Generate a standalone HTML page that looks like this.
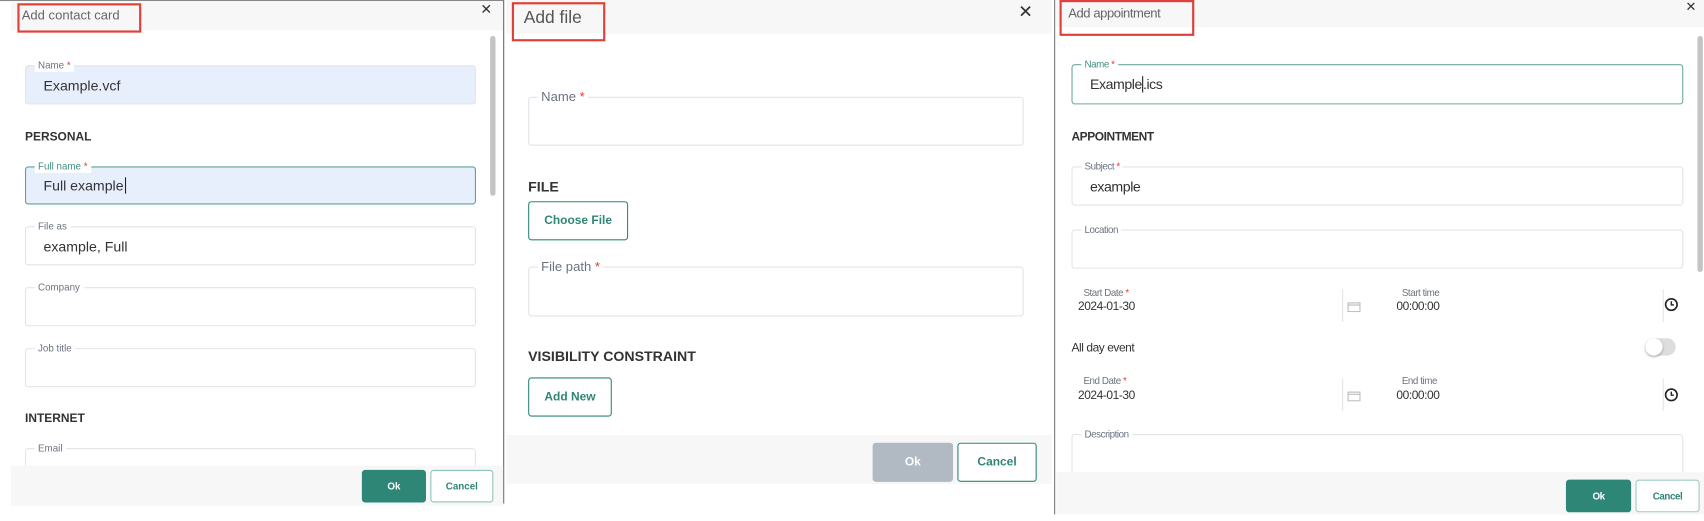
<!DOCTYPE html>
<html><head><meta charset="utf-8"><style>
*{box-sizing:border-box;margin:0;padding:0}
html,body{width:1704px;height:521px;overflow:hidden;background:#fff;font-family:"Liberation Sans",sans-serif}
#w{position:absolute;left:0;top:0;width:1568px;height:479px;transform:scale(1.0867,1.0877);transform-origin:0 0}
.a{position:absolute}
.hd{background:#f7f7f7}
.red{border:2px solid #e0403a}
.fld{position:absolute;border:1px solid #e2e4e8;border-radius:3px;background:#fff}
.lbl{position:absolute;top:-6px;left:8px;background:#fff;padding:0 3px;font-size:9px;color:#6b7280;line-height:11px}
.lbl b{color:#e53935;font-weight:normal}
.val{position:absolute;left:16px;font-size:13px;color:#333}
.sec{position:absolute;font-weight:bold;color:#333}
.btn{position:absolute;border:1px solid #2e8677;border-radius:3px;color:#2e8677;font-weight:bold;display:flex;align-items:center;justify-content:center}
.ok{background:#2e8677;color:#fff}
.x{position:absolute;color:#333;line-height:1}
.rp{letter-spacing:-0.4px}
</style></head><body><div id="w">

<!-- LEFT -->
<div class="a" style="left:0;top:0;width:463px;height:1px;background:#888"></div>
<div class="a hd" style="left:10px;top:1px;width:453px;height:27px"></div>
<div class="a" style="left:20px;top:7px;font-size:12px;color:#666">Add contact card</div>
<div class="a red" style="left:16px;top:3px;width:114px;height:27px"></div>
<div class="x" style="left:442px;top:2px;font-size:13px">✕</div>
<div class="a" style="left:463px;top:0;width:1px;height:463px;background:#666"></div>
<div class="a" style="left:451px;top:33px;width:5px;height:147px;background:#c4c4c4;border-radius:3px"></div>

<div class="fld" style="left:23px;top:60px;width:415px;height:36px;background:#e8effc"><div class="lbl" style="background:#fff">Name <b>*</b></div><div class="val" style="top:10px">Example.vcf</div></div>
<div class="sec" style="left:23px;top:120px;font-size:11px">PERSONAL</div>
<div class="fld" style="left:23px;top:153px;width:415px;height:35px;background:#e8effc;border-color:#5fa094"><div class="lbl" style="color:#3f8f81">Full name <b>*</b></div><div class="val" style="top:9px">Full example<span style="border-left:1px solid #222;margin-left:1px"></span></div></div>
<div class="fld" style="left:23px;top:208px;width:415px;height:36px"><div class="lbl">File as</div><div class="val" style="top:10px">example, Full</div></div>
<div class="fld" style="left:23px;top:264px;width:415px;height:36px"><div class="lbl">Company</div></div>
<div class="fld" style="left:23px;top:320px;width:415px;height:36px"><div class="lbl">Job title</div></div>
<div class="sec" style="left:23px;top:379px;font-size:11px">INTERNET</div>
<div class="fld" style="left:23px;top:412px;width:415px;height:36px"><div class="lbl">Email</div></div>
<div class="a hd" style="left:10px;top:428px;width:453px;height:37px"></div>
<div class="btn ok" style="left:333px;top:432px;width:59px;height:30px;font-size:9px">Ok</div>
<div class="btn" style="left:396px;top:432px;width:58px;height:30px;font-size:9px;border-color:#8fc3ba;background:#fff">Cancel</div>

<!-- MIDDLE -->
<div class="a hd" style="left:466px;top:0;width:502px;height:31px"></div>
<div class="a" style="left:482px;top:8px;font-size:16px;color:#555">Add file</div>
<div class="a red" style="left:471px;top:2px;width:86px;height:36px"></div>
<div class="x" style="left:937px;top:4px;font-size:16px">✕</div>
<div class="fld" style="left:486px;top:89px;width:456px;height:45px"><div class="lbl" style="font-size:12px;top:-8px;line-height:14px">Name <b>*</b></div></div>
<div class="sec" style="left:486px;top:164px;font-size:13px">FILE</div>
<div class="btn" style="left:486px;top:185px;width:92px;height:36px;font-size:11px">Choose File</div>
<div class="fld" style="left:486px;top:245px;width:456px;height:46px"><div class="lbl" style="font-size:12px;top:-8px;line-height:14px">File path <b>*</b></div></div>
<div class="sec" style="left:486px;top:320px;font-size:13px">VISIBILITY CONSTRAINT</div>
<div class="btn" style="left:486px;top:347px;width:77px;height:36px;font-size:11px">Add New</div>
<div class="a hd" style="left:466px;top:400px;width:502px;height:45px"></div>
<div class="btn" style="left:803px;top:407px;width:74px;height:36px;font-size:11px;background:#b1b9c2;border-color:#b1b9c2;color:#fff">Ok</div>
<div class="btn" style="left:881px;top:407px;width:73px;height:36px;font-size:11px;background:#fff">Cancel</div>
<div class="a" style="left:970px;top:0;width:1px;height:473px;background:#777"></div>

<!-- RIGHT -->
<div class="rp">
<div class="a hd" style="left:972px;top:0;width:596px;height:25px"></div>
<div class="a" style="left:983px;top:5px;font-size:12px;color:#666">Add appointment</div>
<div class="a red" style="left:975px;top:0;width:124px;height:33px"></div>
<div class="x" style="left:1551px;top:0;font-size:12px">✕</div>
<div class="a" style="left:1562px;top:33px;width:5px;height:217px;background:#c4c4c4;border-radius:3px"></div>
<div class="fld" style="left:986px;top:59px;width:563px;height:37px;border-color:#6aa99d"><div class="lbl" style="color:#3f8f81">Name <b>*</b></div><div class="val" style="top:10px">Example<span style="border-left:1px solid #222"></span>.ics</div></div>
<div class="sec" style="left:986px;top:120px;font-size:11px">APPOINTMENT</div>
<div class="fld" style="left:986px;top:153px;width:563px;height:36px"><div class="lbl">Subject <b>*</b></div><div class="val" style="top:10px">example</div></div>
<div class="fld" style="left:986px;top:211px;width:563px;height:36px"><div class="lbl">Location</div></div>

<div class="a" style="left:997px;top:264px;font-size:9px;color:#6b7280">Start Date <b style="color:#e53935;font-weight:normal">*</b></div>
<div class="a" style="left:992px;top:276px;font-size:11px;color:#333">2024-01-30</div>
<div class="a" style="left:1235px;top:266px;width:1px;height:30px;background:#e4e4e4"></div>
<svg class="a" style="left:1240px;top:277px" width="12" height="10" viewBox="0 0 12 10"><rect x="0.5" y="1.5" width="11" height="8" fill="none" stroke="#bbb"/><line x1="0" y1="3.5" x2="12" y2="3.5" stroke="#bbb"/></svg>
<div class="a" style="left:1290px;top:264px;font-size:9px;color:#6b7280">Start time</div>
<div class="a" style="left:1285px;top:276px;font-size:11px;color:#333">00:00:00</div>
<div class="a" style="left:1530px;top:266px;width:1px;height:30px;background:#e4e4e4"></div>
<svg class="a" style="left:1531px;top:273px" width="14" height="14" viewBox="0 0 14 14"><circle cx="7" cy="7" r="5.3" fill="none" stroke="#222" stroke-width="1.5"/><path d="M7 4V7.3H9.3" fill="none" stroke="#222" stroke-width="1.3"/></svg>

<div class="a" style="left:986px;top:314px;font-size:11px;color:#333">All day event</div>
<div class="a" style="left:1514px;top:311px;width:28px;height:16px;border-radius:8px;background:#ddd"></div>
<div class="a" style="left:1514px;top:311px;width:16px;height:16px;border-radius:8px;background:#fff;box-shadow:0 1px 2px rgba(0,0,0,.35)"></div>

<div class="a" style="left:997px;top:345px;font-size:9px;color:#6b7280">End Date <b style="color:#e53935;font-weight:normal">*</b></div>
<div class="a" style="left:992px;top:358px;font-size:11px;color:#333">2024-01-30</div>
<div class="a" style="left:1235px;top:348px;width:1px;height:30px;background:#e4e4e4"></div>
<svg class="a" style="left:1240px;top:359px" width="12" height="10" viewBox="0 0 12 10"><rect x="0.5" y="1.5" width="11" height="8" fill="none" stroke="#bbb"/><line x1="0" y1="3.5" x2="12" y2="3.5" stroke="#bbb"/></svg>
<div class="a" style="left:1290px;top:345px;font-size:9px;color:#6b7280">End time</div>
<div class="a" style="left:1285px;top:358px;font-size:11px;color:#333">00:00:00</div>
<div class="a" style="left:1530px;top:348px;width:1px;height:30px;background:#e4e4e4"></div>
<svg class="a" style="left:1531px;top:356px" width="14" height="14" viewBox="0 0 14 14"><circle cx="7" cy="7" r="5.3" fill="none" stroke="#222" stroke-width="1.5"/><path d="M7 4V7.3H9.3" fill="none" stroke="#222" stroke-width="1.3"/></svg>

<div class="fld" style="left:986px;top:399px;width:563px;height:50px"><div class="lbl">Description</div></div>
<div class="a hd" style="left:972px;top:434px;width:596px;height:39px"></div>
<div class="btn ok" style="left:1441px;top:441px;width:60px;height:30px;font-size:9px">Ok</div>
<div class="btn" style="left:1505px;top:441px;width:59px;height:30px;font-size:9px;border-color:#9fcac2;background:#fff">Cancel</div>
</div>
</div></body></html>
